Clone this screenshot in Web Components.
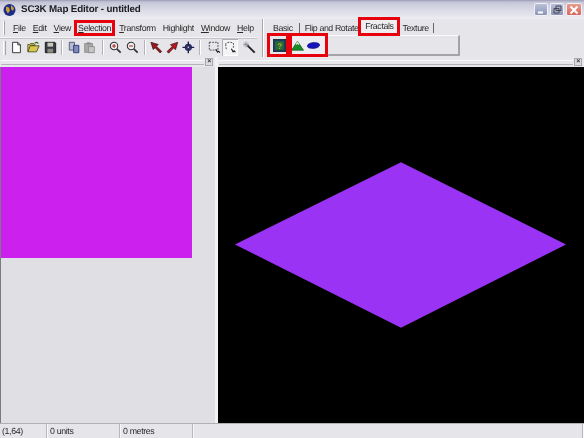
<!DOCTYPE html>
<html>
<head>
<meta charset="utf-8">
<title>SC3K Map Editor</title>
<style>
  html, body { margin: 0; height: 100%; overflow: hidden; }
  body { font: 8.8px "Liberation Sans", Arial, sans-serif; letter-spacing: -.35px; text-rendering: geometricPrecision; color: #2a2a2a; background: #e4e4e8; }
  map-editor { height: 438px; }
</style>
</head>
<body>
<map-editor></map-editor>
<script>
// icons for the toolbars
const ICONS = {
  doc: '<path d="M3 1.5h6l3 3v9H3z" fill="#fff" stroke="#222"/><path d="M9 1.5v3h3" fill="none" stroke="#222"/>',
  open: '<path d="M1 12.5V4h2l1-1h4l1 1v1H4l-3 7.5h10l3-7H4" fill="#d8c850" stroke="#4a4a18"/><path d="M9 2.5c2-1.5 3-1 4 0.5" fill="none" stroke="#2a6a20" stroke-width="1.4"/>',
  save: '<path d="M1.5 1.5h11l1 1v11h-12z" fill="#3a3a44" stroke="#111"/><rect x="4" y="2" width="6.5" height="4.5" fill="#c8c8b8"/><rect x="4" y="9" width="6.5" height="4.5" fill="#8a8a80"/>',
  copy: '<path d="M1.5 1.5h6v9h-6z" fill="#b8bcd0" stroke="#44506a"/><path d="M6.5 5h6v8.5h-6z" fill="#7c8cc0" stroke="#24306a"/>',
  paste: '<rect x="2" y="3" width="9" height="10" fill="#a8a8a8" stroke="#8a8a8a"/><rect x="6.5" y="6.5" width="6.5" height="7" fill="#c6c6c6" stroke="#8a8a8a"/><rect x="4.5" y="1.5" width="4" height="2.5" fill="#8a8a8a"/>',
  zoomIn: '<circle cx="5.8" cy="5.8" r="4.3" fill="#eee" stroke="#333" stroke-width="1.2"/><path d="M9 9l4.5 4.5" stroke="#333" stroke-width="2"/><path d="M3.6 5.8h4.4M5.8 3.6v4.4" stroke="#b02020" stroke-width="1.2"/>',
  zoomOut: '<circle cx="5.8" cy="5.8" r="4.3" fill="#eee" stroke="#333" stroke-width="1.2"/><path d="M9 9l4.5 4.5" stroke="#333" stroke-width="2"/><path d="M3.6 5.8h4.4" stroke="#b02020" stroke-width="1.2"/>',
  arrowL: '<path d="M1 1.500l8.500 2.500-2 2.200 6 5.800-1.800 1.800-5.800-6-2.200 2z" fill="#a01420" stroke="#2c1014" stroke-width=".8"/>',
  arrowR: '<path d="M13.500 1.500l-2.500 8.500-2.200-2-5.800 6-1.800-1.800 6-5.800-2-2.200z" fill="#b81820" stroke="#2c1014" stroke-width=".8"/>',
  cross: '<circle cx="7.300" cy="7.300" r="3.800" fill="#3c3c7c" stroke="#20204c"/><path d="M7.300 .5v13.600M.5 7.300h13.600" stroke="#20204c" stroke-width="1.600"/><circle cx="7.300" cy="7.300" r="1" fill="#c8c8e0"/>',
  selRect: '<rect x="1.5" y="1.5" width="10" height="9" fill="none" stroke="#333" stroke-dasharray="2 1.3"/><path d="M9 9.5l2 3.5 1.2-1.2 1.5 1.7" fill="none" stroke="#111" stroke-width="1.2"/>',
  selFree: '<path d="M2 4c0-2 2-2.500 4-2.500s5 0 5 2 0 4-.5 5M2 4c0 2 .5 5 1 6" fill="none" stroke="#333" stroke-dasharray="2 1.3"/><path d="M8.500 9l2 3.500 1.200-1.200 1.500 1.700" fill="none" stroke="#111" stroke-width="1.2"/>',
  wand: '<path d="M5 5l8.500 8.500" stroke="#222" stroke-width="2.200"/><path d="M3.500 .5v7M0 4h7M1.200 1.700l4.600 4.600M5.800 1.700L1.200 6.300" stroke="#8a8a9a" stroke-width=".9"/>',
  fractal: '<rect x=".5" y=".5" width="14" height="14" fill="#1c3c5c" stroke="#162a3c"/><rect x="2.500" y="2.500" width="10" height="10" fill="#2a6a3a"/><text x="7.500" y="11" text-anchor="middle" font-size="9.500" font-weight="700" font-family="Liberation Sans, sans-serif" fill="#a8b020">?</text>',
  hill: '<path d="M.5 13L7.500 2.500l7 10.500z" fill="#1c8a28" stroke="#14601c" stroke-width=".8"/><path d="M5.300 5.800L7.500 2.500l2.300 3.300-1.200 1-1.100-.9-1.100.9z" fill="#cfe8c8"/>',
  lake: '<ellipse cx="7.500" cy="7.500" rx="7.200" ry="3.500" fill="#1414b8" stroke="#0c0c80" stroke-width=".6" transform="rotate(-6 7.500 7.500)"/>'
};

class ToolIcon extends HTMLElement {
  connectedCallback() {
    const name = this.getAttribute('name');
    const size = this.getAttribute('size') || 13;
    this.attachShadow({ mode: 'open' }).innerHTML = `
      <style>
        :host { display: block; width: 16px; height: 17px; flex: none; margin-left: var(--gap, 0); }
        :host([pressed]) { background: #f4f4f6; box-shadow: inset 1px 1px #b0b0b4, inset -1px -1px #fff; }
        div { display: flex; height: 100%; align-items: center; justify-content: center; }
        svg { display: block; }
      </style>
      <div><svg width="${size}" height="${size}" viewBox="0 0 15 15">${ICONS[name] || ''}</svg></div>`;
  }
}
customElements.define('tool-icon', ToolIcon);

class TitleBar extends HTMLElement {
  constructor() {
    super();
    this.attachShadow({ mode: 'open' }).innerHTML = `
      <style>
        :host {
          display: flex; align-items: center; height: 19px; box-sizing: border-box;
          padding: 0 2px 0 3px;
          background: linear-gradient(#9a9cb6 0, #c4c4d6 2px, #d4d4e2 7px, #e6e6ee 16px, #eeeef2 19px);
        }
        svg { display: block; flex: none; }
        .name { margin-left: 5px; font: 700 9.8px "Liberation Sans", Arial, sans-serif; color: #1c1c24; letter-spacing: -.15px; white-space: nowrap; flex: 1; }
        .btn { width: 14px; height: 13px; border-radius: 2px; box-sizing: border-box; border: 1px solid #f0f0f6; background: linear-gradient(#b8c0d8, #8c96b8); margin-left: 2px; display: flex; align-items: center; justify-content: center; }
        .close { width: 16px; background: linear-gradient(#e89c8c, #d8685c); }
      </style>
      <svg width="13" height="14" viewBox="0 0 13 14">
        <circle cx="6.500" cy="7" r="6" fill="#1c2c88"/>
        <path d="M3 3.500l3 1 1 3-2 3-2-3zM8 2l3 3-1 3-2-2z" fill="#c8a030"/>
      </svg>
      <div class="name">SC3K Map Editor - untitled</div>
      <div class="btn"><svg width="8" height="8" viewBox="0 0 8 8"><path d="M1 6.500h5" stroke="#fff" stroke-width="2"/></svg></div>
      <div class="btn"><svg width="9" height="9" viewBox="0 0 9 9"><path d="M3 1h5v4.500H3zM1 3.500h5V8H1z" fill="#a4acc8" stroke="#445"/></svg></div>
      <div class="btn close"><svg width="10" height="10" viewBox="0 0 10 10"><path d="M1.500 1.500l7 7M8.500 1.500l-7 7" stroke="#fff" stroke-width="2"/></svg></div>`;
  }
}
customElements.define('title-bar', TitleBar);

class MenuBar extends HTMLElement {
  constructor() {
    super();
    this.attachShadow({ mode: 'open' }).innerHTML = `
      <style>
        :host { display: flex; align-items: center; height: 19px; box-sizing: border-box; padding-left: 3px; border-bottom: 1px solid #f4f4f6; box-shadow: 0 1px #c4c4c8; }
        .grip { width: 2px; height: 14px; margin-right: 8px; border-left: 1px solid #fff; border-right: 1px solid #a4a4a8; }
      </style>
      <div class="grip"></div><slot></slot>`;
  }
}
customElements.define('menu-bar', MenuBar);

class MenuItem extends HTMLElement {
  constructor() {
    super();
    this.attachShadow({ mode: 'open' }).innerHTML = `
      <style>
        :host { display: block; margin-right: 7px; white-space: nowrap; }
        :host([marked]) { margin: 0 6px 0 -2px; padding: 0 2px; outline: 3px solid #e8000c; outline-offset: -1px; height: 12px; line-height: 12px; }
      </style>
      <slot></slot>`;
  }
}
customElements.define('menu-item', MenuItem);

class ToolBar extends HTMLElement {
  constructor() {
    super();
    this.attachShadow({ mode: 'open' }).innerHTML = `
      <style>
        :host { display: flex; align-items: center; height: 19px; padding-left: 3px; }
        .grip { width: 2px; height: 14px; margin-right: 2px; border-left: 1px solid #fff; border-right: 1px solid #a4a4a8; }
      </style>
      <div class="grip"></div><slot></slot>`;
  }
}
customElements.define('tool-bar', ToolBar);

class ToolSep extends HTMLElement {
  constructor() {
    super();
    this.attachShadow({ mode: 'open' }).innerHTML = `
      <style>:host { display: block; width: 1px; height: 15px; margin: 0 4px 0 3px; background: #b4b4b8; box-shadow: 1px 0 #fff; }</style>`;
  }
}
customElements.define('tool-sep', ToolSep);

class TabPanel extends HTMLElement {
  constructor() {
    super();
    this.attachShadow({ mode: 'open' }).innerHTML = `
      <style>
        :host { display: block; width: 198px; height: 38px; margin-left: 5px; padding-left: 4px; border-left: 1px solid #a8a8ac; box-shadow: inset 1px 0 #fff; }
        .tabs { display: flex; height: 14px; align-items: center; padding: 2px 0 0 6px; }
        .tab { padding: 0 4px 0 0; margin-right: 5px; border-right: 1px solid #666; line-height: 10px; white-space: nowrap; }
        .basic { padding-right: 6px; }
        .flip { padding: 0; margin-right: 3px; border: 0; letter-spacing: -.4px; }
        .on { width: 36px; height: 13px; box-sizing: border-box; margin: 0 5px 0 0; padding: 0; border: 0; text-align: center; line-height: 13px; outline: 3px solid #e8000c; transform: translateY(-2px); background: #eeeef0; }
        .body { display: flex; align-items: center; width: 193px; height: 21px; box-sizing: border-box; background: #e6e6ea; border-right: 2px solid #a4a4a8; border-bottom: 2px solid #a4a4a8; border-top: 1px solid #fafafa; }
        .set { display: flex; align-items: center; box-sizing: border-box; outline: 3px solid #e8000c; outline-offset: -3px; height: 24px; flex: none; }
        .set.one { width: 22px; padding-left: 4px; }
        .set.two { width: 39px; background: #eeeef2; }
      </style>
      <div class="tabs">
        <div class="tab basic">Basic</div>
        <div class="tab flip">Flip and Rotate</div>
        <div class="tab on">Fractals</div>
        <div class="tab">Texture</div>
      </div>
      <div class="body">
        <div class="set one"><tool-icon name="fractal"></tool-icon></div>
        <div class="set two"><tool-icon name="hill"></tool-icon><tool-icon name="lake"></tool-icon></div>
      </div>`;
  }
}
customElements.define('tab-panel', TabPanel);

class DockPane extends HTMLElement {
  constructor() {
    super();
    this.attachShadow({ mode: 'open' }).innerHTML = `
      <style>
        :host { display: flex; flex-direction: column; min-width: 0; min-height: 0; }
        .head { display: flex; align-items: center; height: 10px; flex: none; padding-right: 2px; background: #e8e8ec; }
        .lines { flex: 1; height: 3px; margin: 0 1px; border-top: 1px solid #fafafa; border-bottom: 1px solid #b4b4b8; }
        .x { width: 8px; height: 8px; box-sizing: border-box; border: 1px solid #a8a8ac; background: #dcdce0; font: 700 7px/6px "Liberation Sans", Arial, sans-serif; text-align: center; color: #333; }
        .main { flex: 1; min-height: 0; display: flex; }
      </style>
      <div class="head"><div class="lines"></div><div class="x">×</div></div>
      <div class="main"><slot></slot></div>`;
  }
}
customElements.define('dock-pane', DockPane);

class StatusBar extends HTMLElement {
  constructor() {
    super();
    this.attachShadow({ mode: 'open' }).innerHTML = `
      <style>
        :host { display: grid; grid-template-columns: 48px 73px 73px 1fr; height: 15px; background: #e6e6ea; border-top: 1px solid #b0b0b4; box-sizing: border-box; }
        ::slotted(span) { display: block; line-height: 14px; padding-left: 2px; border-right: 1px solid #f8f8f8; box-shadow: inset -1px 0 #b8b8bc; white-space: nowrap; }
      </style>
      <slot></slot>`;
  }
}
customElements.define('status-bar', StatusBar);

class MapEditor extends HTMLElement {
  constructor() {
    super();
    this.attachShadow({ mode: 'open' }).innerHTML = `
      <style>
        :host { display: flex; flex-direction: column; background: #e6e6ea; filter: blur(.3px); }
        .top { display: flex; height: 38px; flex: none; }
        .bars { width: 257px; flex: none; }
        .panes { flex: 1; min-height: 0; display: grid; grid-template-columns: 215px 1fr; gap: 3px; background: #f2f2f4; }
        .list { flex: 1; background: #e0e0e4; border-left: 1px solid #7c7c80; }
        .swatch { width: 191px; height: 191px; background: #cc20ee; }
        .view { flex: 1; background: #000; display: flex; min-width: 0; }
        svg { display: block; width: 100%; height: 100%; }
        tool-icon.a { --gap: 1px; }
        tool-icon.b { --gap: 3px; }
        tool-icon.n { --gap: -1px; }
        tool-sep.z { margin: 0 5px; }
        tool-sep.w { margin-right: 6px; }
      </style>
      <title-bar></title-bar>
      <div class="top">
        <div class="bars">
          <menu-bar>
            <menu-item><u>F</u>ile</menu-item>
            <menu-item><u>E</u>dit</menu-item>
            <menu-item><u>V</u>iew</menu-item>
            <menu-item marked><u>S</u>election</menu-item>
            <menu-item><u>T</u>ransform</menu-item>
            <menu-item>Highlight</menu-item>
            <menu-item><u>W</u>indow</menu-item>
            <menu-item><u>H</u>elp</menu-item>
          </menu-bar>
          <tool-bar>
            <tool-icon name="doc"></tool-icon>
            <tool-icon name="open" class="a"></tool-icon>
            <tool-icon name="save" class="a"></tool-icon>
            <tool-sep></tool-sep>
            <tool-icon name="copy"></tool-icon>
            <tool-icon name="paste" class="n"></tool-icon>
            <tool-sep class="z"></tool-sep>
            <tool-icon name="zoomIn"></tool-icon>
            <tool-icon name="zoomOut" class="a"></tool-icon>
            <tool-sep></tool-sep>
            <tool-icon name="arrowL"></tool-icon>
            <tool-icon name="arrowR"></tool-icon>
            <tool-icon name="cross"></tool-icon>
            <tool-sep class="w"></tool-sep>
            <tool-icon name="selRect"></tool-icon>
            <tool-icon name="selFree" pressed></tool-icon>
            <tool-icon name="wand" class="b"></tool-icon>
          </tool-bar>
        </div>
        <tab-panel></tab-panel>
      </div>
      <div class="panes">
        <dock-pane>
          <div class="list"><div class="swatch"></div></div>
        </dock-pane>
        <dock-pane>
          <div class="view">
            <svg viewBox="0 0 366 355" preserveAspectRatio="none">
              <path d="M183 95L348 177 183 260 17 177z" fill="#9a33f4"/>
            </svg>
          </div>
        </dock-pane>
      </div>
      <status-bar>
        <span>(1,64)</span>
        <span>0 units</span>
        <span>0 metres</span>
        <span></span>
      </status-bar>`;
  }
}
customElements.define('map-editor', MapEditor);
</script>
</body>
</html>
